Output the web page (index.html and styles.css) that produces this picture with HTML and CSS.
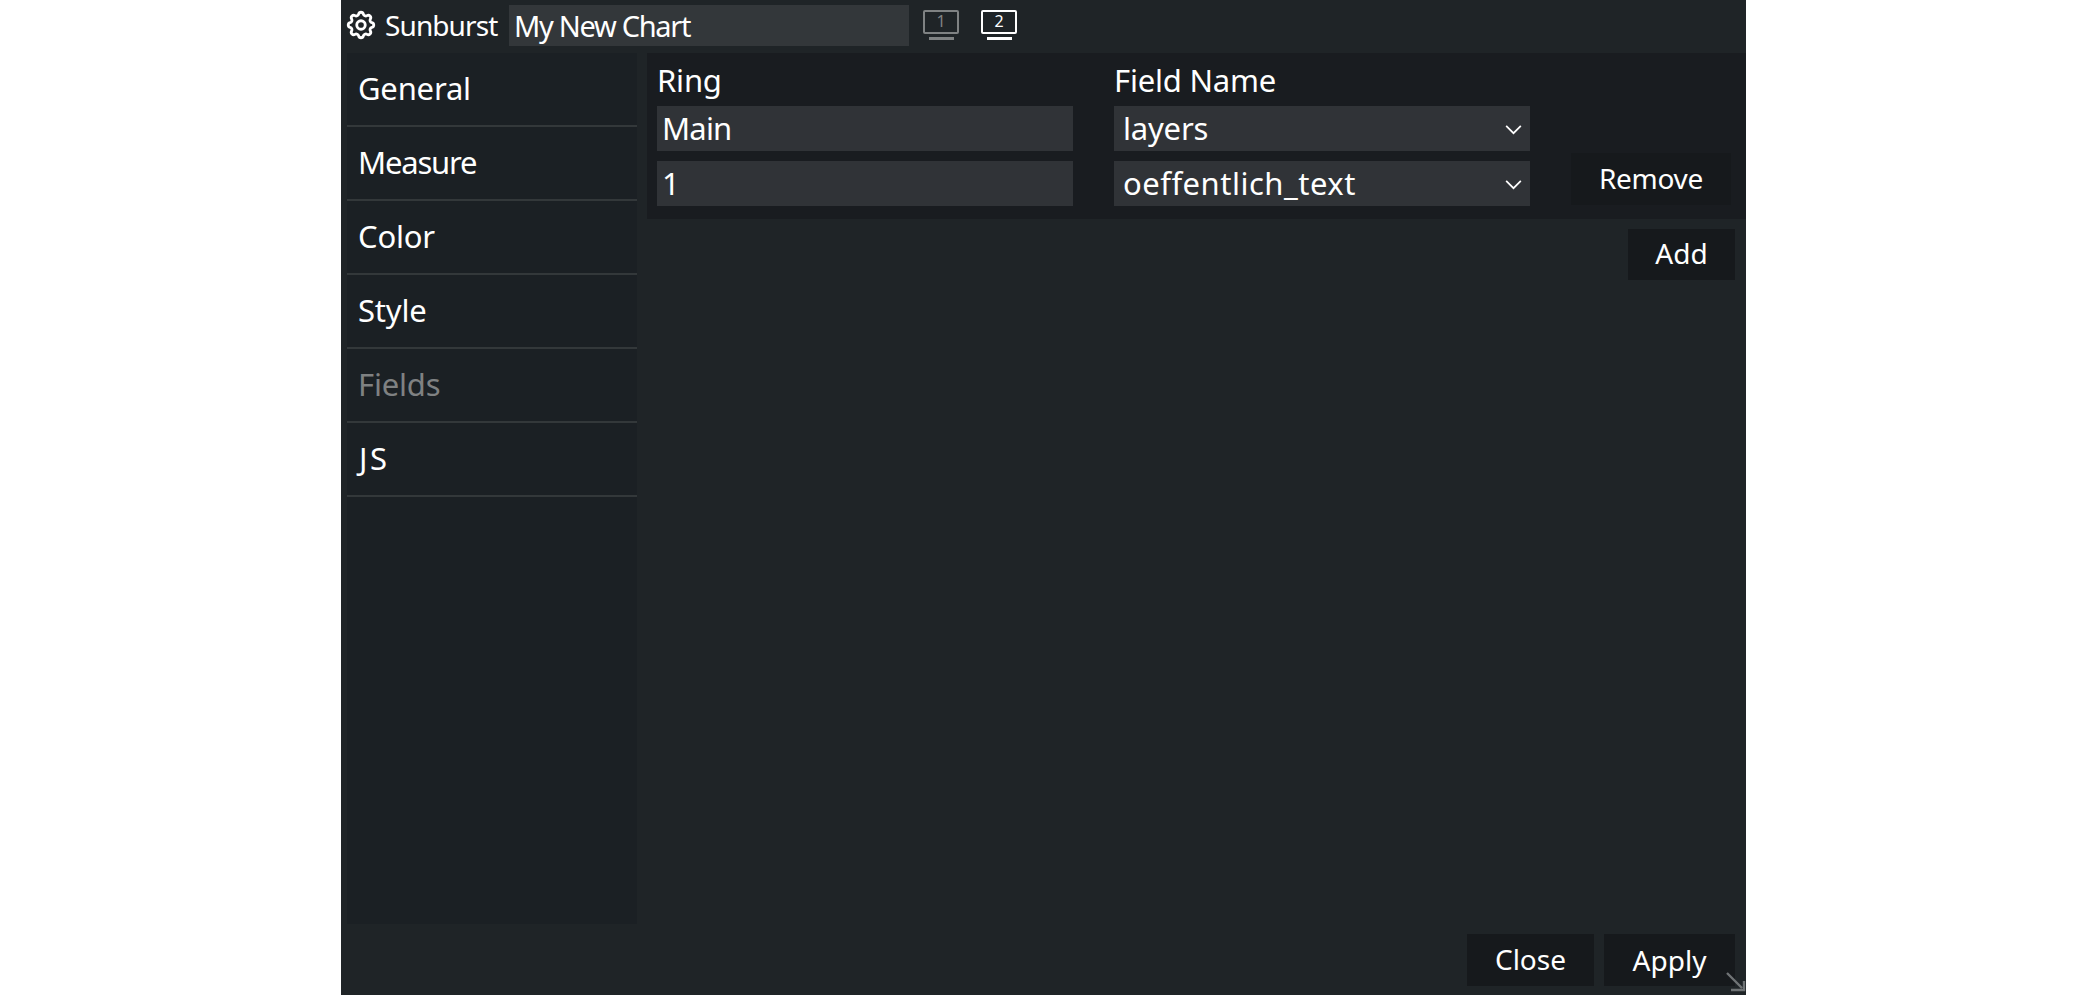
FILE: index.html
```html
<!DOCTYPE html>
<html lang="en">
<head>
<meta charset="utf-8">
<title>Sunburst</title>
<link rel="stylesheet" href="styles.css">
</head>
<body>
<div class="dialog">
  <header class="head">
    <svg class="gear" viewBox="0 0 24 24" fill="none" stroke="currentColor" stroke-width="2" stroke-linecap="round" stroke-linejoin="round"><path d="M10.325 4.317c.426-1.756 2.924-1.756 3.35 0a1.724 1.724 0 0 0 2.573 1.066c1.543-.94 3.31.826 2.37 2.37a1.724 1.724 0 0 0 1.065 2.572c1.756.426 1.756 2.924 0 3.35a1.724 1.724 0 0 0-1.066 2.573c.94 1.543-.826 3.31-2.37 2.37a1.724 1.724 0 0 0-2.572 1.065c-.426 1.756-2.924 1.756-3.35 0a1.724 1.724 0 0 0-2.573-1.066c-1.543.94-3.31-.826-2.37-2.37a1.724 1.724 0 0 0-1.065-2.572c-1.756-.426-1.756-2.924 0-3.35a1.724 1.724 0 0 0 1.066-2.573c-.94-1.543.826-3.31 2.37-2.37c1 .608 2.296.07 2.572-1.065z"/><circle cx="12" cy="12" r="3"/></svg>
    <span class="kind">Sunburst</span>
    <input class="field title" type="text" value="My New Chart">
    <div class="screen dim">
      <div class="monitor">1</div>
      <div class="stand"></div>
    </div>
    <div class="screen">
      <div class="monitor">2</div>
      <div class="stand"></div>
    </div>
  </header>
  <div class="body">
    <nav class="side">
      <a class="tab">General</a>
      <a class="tab tight">Measure</a>
      <a class="tab">Color</a>
      <a class="tab">Style</a>
      <a class="tab active">Fields</a>
      <a class="tab wide">JS</a>
    </nav>
    <main class="main">
      <section class="rings">
        <div class="label">Ring</div>
        <div class="label">Field Name</div>
        <div></div>
        <input class="field cell" type="text" value="Main">
        <div class="pick"><span class="pick-text">layers</span>
          <svg class="chev" viewBox="0 0 14 9" fill="none" stroke="currentColor" stroke-width="1.4"><path d="M1 1.5l6 6 6-6"/></svg></div>
        <div></div>
        <input class="field cell" type="text" value="1">
        <div class="pick"><span class="pick-text long">oeffentlich_text</span>
          <svg class="chev" viewBox="0 0 14 9" fill="none" stroke="currentColor" stroke-width="1.4"><path d="M1 1.5l6 6 6-6"/></svg></div>
        <button class="btn remove">Remove</button>
      </section>
      <div class="add-row"><button class="btn add">Add</button></div>
    </main>
  </div>
  <footer class="foot">
    <button class="btn close">Close</button>
    <button class="btn apply">Apply</button>
    <svg class="grip" viewBox="0 0 20 20" fill="none" stroke="#6f7375" stroke-width="2.4"><path d="M1 1l15 15M18 9v9H5"/></svg>
  </footer>
</div>
</body>
</html>
```
FILE: styles.css
```css
* { box-sizing: border-box; }
html, body { margin: 0; height: 100%; background: #fff; overflow: hidden; }
body { font-family: "Noto Sans", "DejaVu Sans", sans-serif; font-weight: 450; color: #fff; }
.dialog { position: relative; margin-left: 341px; width: 1405px; height: 995px; background: #1f2427; display: flex; flex-direction: column; }
.head { height: 53px; display: flex; align-items: center; padding: 0 0 3px 6px; flex: none; }
.gear { width: 34px; height: 34px; flex: none; margin-left: -3px; color: #fff; }
.kind { font-size: 28px; margin-left: 7px; width: 124px; flex: none; letter-spacing: -0.9px; }
.field { background: #303337; border: 0; outline: 0; color: #fff; font-family: inherit; font-weight: 450; margin: 0; }
.title { width: 400px; height: 41px; font-size: 29px; padding: 0 5px; background: #33373a; flex: none; letter-spacing: -1.3px; }
.screen { width: 36px; margin-left: 14px; color: #fff; display: flex; flex-direction: column; align-items: center; flex: none; }
.screen + .screen { margin-left: 22px; }
.screen.dim { color: #7f8283; }
.monitor { width: 36px; height: 24px; border: 2px solid currentColor; border-radius: 2px; font-size: 16px; line-height: 19px; text-align: center; }
.stand { width: 25px; height: 3px; margin-top: 3px; background: currentColor; }
.body { flex: 1; min-height: 0; display: flex; padding-left: 6px; }
.side { width: 290px; height: 871px; background: #1b2024; flex: none; display: flex; flex-direction: column; }
.tab { height: 74px; padding: 0 11px 3px; display: flex; align-items: center; font-size: 31px; border-bottom: 2px solid #33383a; letter-spacing: -0.2px; }
.tab.tight { letter-spacing: -1.2px; }
.tab.wide { letter-spacing: 2.5px; padding-left: 12px; }
.tab.active { color: #7f8182; }
.main { flex: 1; min-width: 0; margin-left: 10px; display: flex; flex-direction: column; }
.rings { background: #191c20; height: 166px; padding: 0 10px; display: grid; grid-template-columns: 416px 416px 160px; grid-template-rows: 53px 45px 45px; column-gap: 41px; row-gap: 0; align-content: start; }
.label { font-size: 31px; line-height: 55px; letter-spacing: -0.2px; }
.cell { width: 416px; height: 45px; font-size: 31px; padding: 0 5px 2px; letter-spacing: -0.8px; }
.pick { position: relative; width: 416px; height: 45px; background: #303337; display: flex; align-items: center; padding: 0 9px 2px; }
.pick-text { font-size: 31px; letter-spacing: -0.2px; }
.pick-text.long { letter-spacing: 0.5px; }
.chev { position: absolute; right: 7px; top: 18px; width: 19px; height: 11px; color: #fff; }
.rings .cell:nth-child(7), .rings .pick:nth-child(8) { margin-top: 10px; }
.btn { background: #16191c; border: 0; color: #fff; font-family: inherit; font-weight: 450; font-size: 28px; padding: 0 0 3px; margin: 0; }
.remove { width: 160px; height: 52px; margin-top: 2px; letter-spacing: -0.3px; }
.add-row { display: flex; justify-content: flex-end; padding: 10px 11px 0 0; }
.add { width: 107px; height: 51px; }
.foot { height: 72px; flex: none; display: flex; justify-content: flex-end; gap: 10px; padding: 11px 11px 0 0; }
.close { width: 127px; height: 52px; }
.apply { width: 131px; height: 52px; padding-bottom: 1px; }
.grip { position: absolute; right: 0; bottom: 3px; width: 20px; height: 20px; }
```
